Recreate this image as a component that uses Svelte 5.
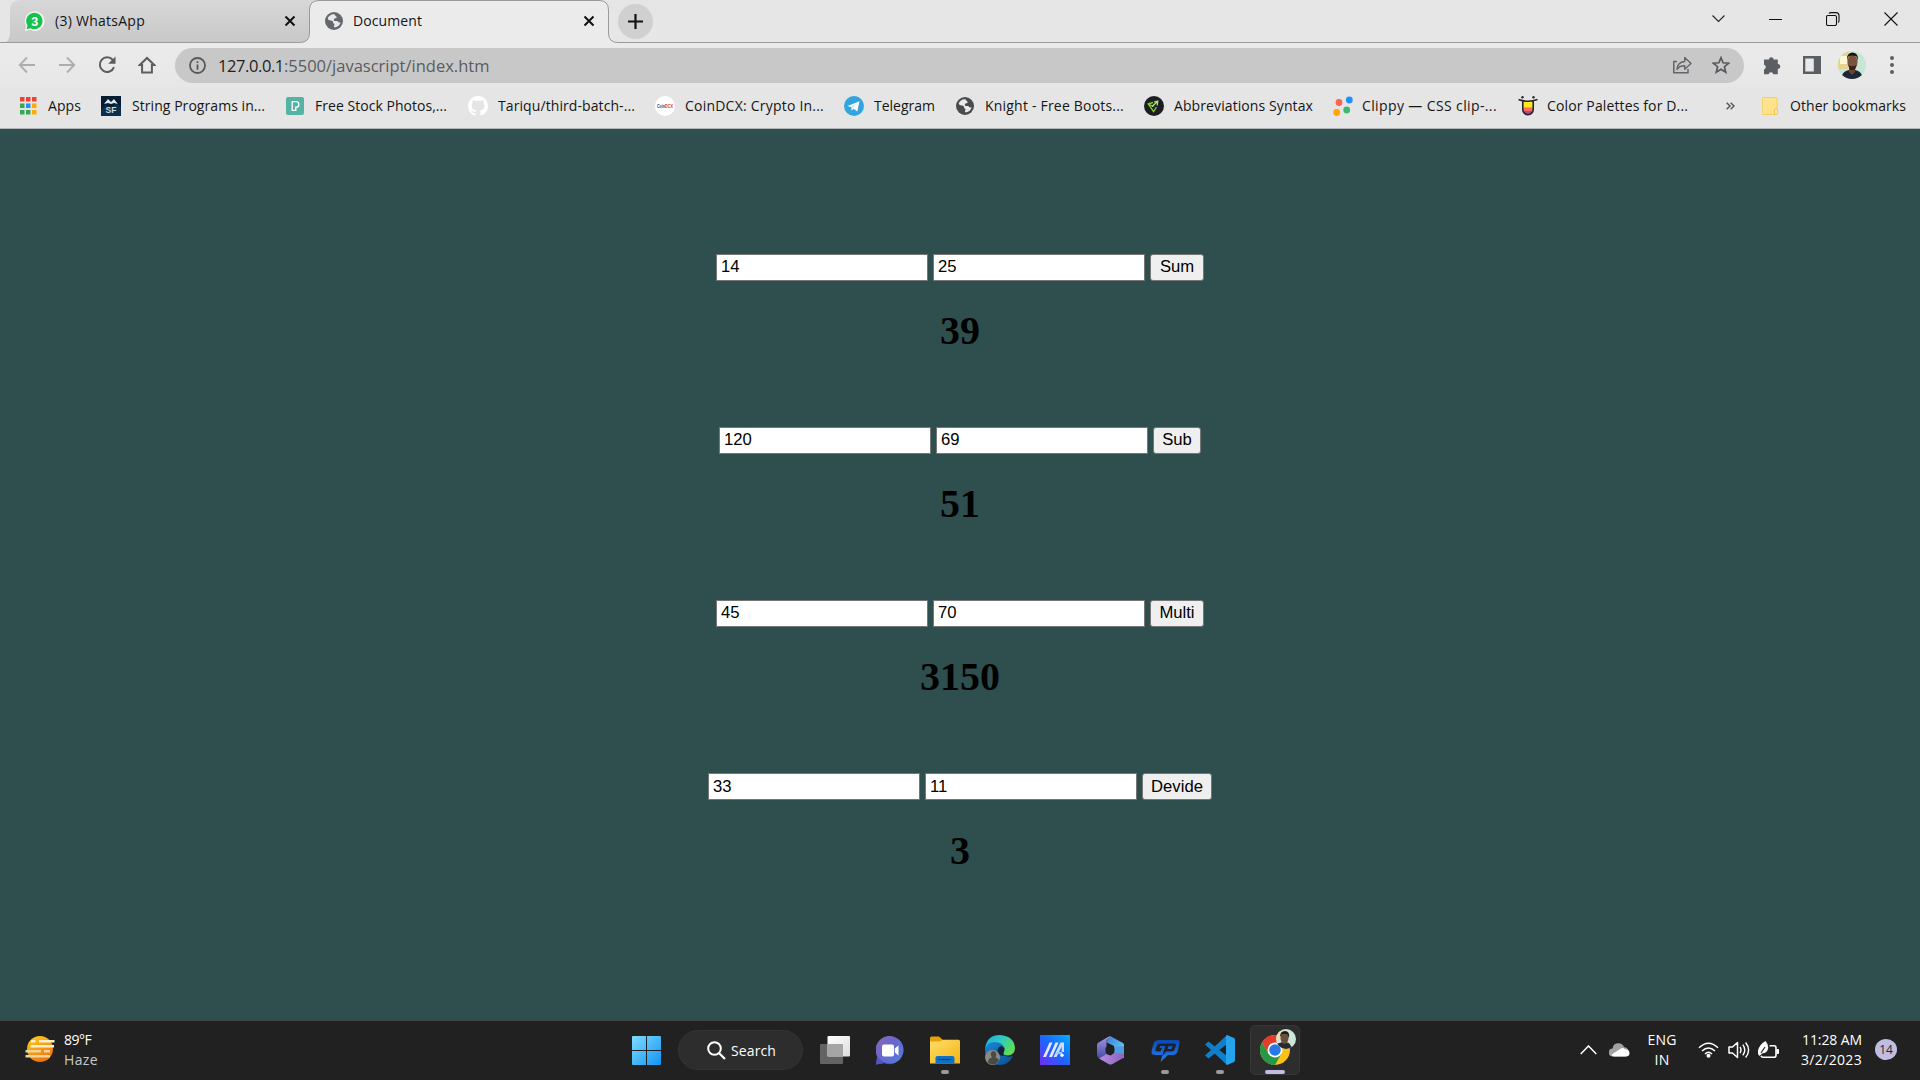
<script>
  let rows = $state([
    { a: '14', b: '25', label: 'Sum', width: 54, run: (x, y) => x + y },
    { a: '120', b: '69', label: 'Sub', width: 48, run: (x, y) => x - y },
    { a: '45', b: '70', label: 'Multi', width: 54, run: (x, y) => x * y },
    { a: '33', b: '11', label: 'Devide', width: 70, run: (x, y) => x / y }
  ]);

  const bookmarks = [
    { icon: 'apps', text: 'Apps', slot: 81, gap: 27, w: 33 },
    { icon: 'sf', text: 'String Programs in...', slot: 185, gap: 30, w: 133 },
    { icon: 'pexels', text: 'Free Stock Photos,...', slot: 182, gap: 28, w: 132 },
    { icon: 'github', text: 'Tariqu/third-batch-...', slot: 187, gap: 29, w: 137 },
    { icon: 'coin', text: 'CoinDCX: Crypto In...', slot: 189, gap: 29, w: 139 },
    { icon: 'telegram', text: 'Telegram', slot: 112, gap: 29, w: 61 },
    { icon: 'globe', text: 'Knight - Free Boots...', slot: 188, gap: 28, w: 139 },
    { icon: 'emmet', text: 'Abbreviations Syntax', slot: 189, gap: 29, w: 139 },
    { icon: 'clippy', text: 'Clippy — CSS clip-...', slot: 185, gap: 28, w: 135 },
    { icon: 'colorhunt', text: 'Color Palettes for D...', slot: 208, gap: 28, w: 141 }
  ];

  // Adjusts letter spacing so that a label takes up the given width.
  function fit(node, width) {
    const natural = node.getBoundingClientRect().width;
    const count = [...node.textContent].length;
    if (count > 1) node.style.letterSpacing = (width - natural) / count + 'px';
  }
</script>

{#snippet globe(color)}
  <svg width="18" height="18" viewBox="0 0 18 18">
    <circle cx="9" cy="9" r="9" fill={color} />
    <path d="M9.4 2.2c-2.9-.4-5.600 1.300-6.700 4.100.2 1.500 1.500 2.100 3.200 2.200 1.700.1 2.300.9 2.200 2.200.1.800 1.400.7 1.400 1.700 0 1-.9 1.500-.5 2.900 3.100.1 5.900-2 6.700-5.100-.9.700-2 .4-2.600-.5-.6-.9-2-.6-3.200-.7-1.300-.2-1.500-2-.4-2.600.8-.4 1.700-.1 2.100-1 .3-.7-.5-1-.9-1.400-.5-.5-.9-1-1.300-1.800z" fill="#e9e9e9" />
  </svg>
{/snippet}

{#snippet cross()}
  <svg width="12" height="12" viewBox="0 0 12 12"><path d="M1.500 1.500l9 9M10.500 1.500l-9 9" stroke="#111" stroke-width="2" /></svg>
{/snippet}

{#snippet face()}
  <rect width="28" height="28" fill="#c6e6d6" />
  <path d="M0 0h11v18H0z" fill="#e4d391" />
  <path d="M2 5h7v8H2z" fill="#fff6d4" />
  <path d="M3 28q1-8 8-9h6q7 1 8 9z" fill="#1d2536" />
  <path d="M11 17h6v4l-3 3-3-3z" fill="#68452f" />
  <ellipse cx="14.500" cy="11" rx="5" ry="7.500" fill="#7b533c" />
  <path d="M9 10q-1-8 5.500-8.500Q21 2 20 10q-1-4-2-5-4-1-7 0-1.500 1-2 5z" fill="#15120f" />
  <path d="M10.500 14q4 2.500 8 0l-1.500 5h-5z" fill="#35231b" />
{/snippet}

{#snippet bookmarkIcon(name)}
  {#if name === 'apps'}
    <svg width="17" height="18" viewBox="0 0 17 18">
      <g fill="#ea4335"><path d="M0 0h4.500v4.500H0zM6 0h4.500v4.500H6zM12 0h4.500v4.500H12z" /></g>
      <path d="M0 6.500h4.500V11H0zM0 13h4.500v4.500H0zM6 13h4.500v4.500H6z" fill="#34a853" />
      <path d="M6 6.500h4.500V11H6z" fill="#2d8cf5" />
      <path d="M12 6.500h4.500V11H12zM12 13h4.500v4.500H12z" fill="#fbac05" />
    </svg>
  {:else if name === 'sf'}
    <svg width="20" height="20" viewBox="0 0 20 20">
      <rect width="20" height="20" fill="#071d35" />
      <path d="M0 14l5-5 4 4 6-6 5 4v9H0z" fill="#0a314c" />
      <path d="M3 8q3-5 7-1 3-4 7 1l-4-1-3 1-3-1z" fill="#dce8ee" />
      <path d="M4 7l3-4 3 3 3-3 3 4z" fill="#dce8ee" />
      <text x="10" y="17" text-anchor="middle" font-family="Liberation Sans, sans-serif" font-weight="700" font-size="8.500" fill="#cfdbe4">SF</text>
    </svg>
  {:else if name === 'pexels'}
    <svg width="18" height="18" viewBox="0 0 18 18">
      <rect width="18" height="18" rx="2" fill="#54b3a5" />
      <path d="M6.200 4.600h4q2.700.2 2.700 2.800t-2.700 2.800H9.800v3.200H6.200z" fill="none" stroke="#fff" stroke-width="1.300" />
    </svg>
  {:else if name === 'github'}
    <svg width="20" height="20" viewBox="0 0 16 16"><path fill="#fff" d="M8 0C3.580 0 0 3.580 0 8c0 3.540 2.290 6.530 5.470 7.590.4.070.55-.17.55-.38 0-.19-.01-.82-.01-1.490-2.010.37-2.530-.49-2.690-.94-.09-.23-.48-.94-.82-1.130-.28-.15-.68-.52-.01-.53.63-.01 1.080.58 1.230.82.720 1.210 1.870.87 2.330.66.070-.52.280-.87.510-1.070-1.780-.2-3.640-.89-3.640-3.950 0-.87.310-1.590.82-2.150-.08-.2-.36-1.020.08-2.120 0 0 .67-.21 2.200.82a7.700 7.700 0 0 1 4 0c1.530-1.040 2.200-.82 2.200-.82.440 1.100.160 1.920.08 2.120.510.560.82 1.270.82 2.150 0 3.070-1.870 3.750-3.650 3.950.290.250.540.730.540 1.480 0 1.070-.01 1.930-.01 2.200 0 .21.150.46.550.38A8 8 0 0 0 8 0z" /></svg>
  {:else if name === 'coin'}
    <svg width="20" height="20" viewBox="0 0 20 20">
      <circle cx="10" cy="10" r="10" fill="#fff" />
      <text x="2" y="12" font-family="Liberation Sans, sans-serif" font-weight="700" font-size="5" textLength="8" lengthAdjust="spacingAndGlyphs" fill="#343c68">Coin</text>
      <text x="10" y="12" font-family="Liberation Sans, sans-serif" font-weight="700" font-size="5" textLength="8" lengthAdjust="spacingAndGlyphs" fill="#ee3226">DCX</text>
    </svg>
  {:else if name === 'telegram'}
    <svg width="20" height="20" viewBox="0 0 20 20">
      <circle cx="10" cy="10" r="10" fill="#30a5df" />
      <path d="M3.500 9.900l12-4.700-2.200 10.300-3.700-2.700-1.800 1.800-.5-3.400z" fill="#fff" />
      <path d="M7.300 11.200l5.700-4-4.600 4.800-.6 2.600z" fill="#b5d9ec" />
    </svg>
  {:else if name === 'globe'}
    {@render globe('#484b4f')}
  {:else if name === 'emmet'}
    <svg width="20" height="20" viewBox="0 0 20 20">
      <circle cx="10" cy="10" r="10" fill="#1b1e22" />
      <path d="M9 6.500L4.200 7.800 9.600 15.500 12.500 11M4.500 8l5 2.500" fill="none" stroke="#8ed41f" stroke-width="1.300" />
      <path d="M8 10.500L13 6M10 6l3.800-1-.6 4.500" fill="none" stroke="#b9ef75" stroke-width="1.200" />
    </svg>
  {:else if name === 'clippy'}
    <svg width="20" height="20" viewBox="0 0 20 20">
      <circle cx="6" cy="6.500" r="3.400" fill="#ff6450" /><circle cx="16.300" cy="4" r="3.400" fill="#1e90ff" />
      <circle cx="3.700" cy="16.500" r="3.400" fill="#ffa500" /><circle cx="13.700" cy="14" r="3.400" fill="#3cb873" />
    </svg>
  {:else}
    <svg width="20" height="20" viewBox="0 0 20 20">
      <clipPath id="tongue"><path d="M4.500 5h11v8.500a5.500 5.500 0 0 1-11 0z" /></clipPath>
      <g clip-path="url(#tongue)"><path d="M4 5h12v7H4z" fill="#ffe81f" /><path d="M4 11.500h12V15H4z" fill="#ff6b60" /><path d="M4 15h12v5H4z" fill="#b0448b" /></g>
      <path d="M.5 3.500q9.500 3.500 19 0M4.800 5v8.500a5.200 5.200 0 0 0 10.400 0V5" fill="none" stroke="#25252b" stroke-width="1.600" />
      <circle cx="4.500" cy="1.200" r="1.200" fill="#25252b" /><circle cx="15.500" cy="1.200" r="1.200" fill="#25252b" />
    </svg>
  {/if}
{/snippet}

<div class="screen">
  <header class="tabstrip">
    <svg class="outline" width="1920" height="43" viewBox="0 0 1920 43">
      <defs>
        <linearGradient id="tabIdle" x1="0" y1="0" x2="0" y2="1"><stop offset="0" stop-color="#d7d7d7" /><stop offset="1" stop-color="#c8c8c8" /></linearGradient>
      </defs>
      <path d="M1 43Q10 43 10 33V10Q10 0 20 0H320V33Q309 43 300 43z" fill="url(#tabIdle)" />
      <path d="M300 43Q309.500 42 309.500 33V10Q309.500.5 319 .5H599Q608.500.5 608.500 10V33Q608.500 42.500 618 42.500V43z" fill="#ebebeb" />
      <path d="M0 42.500H299.500Q309.500 42.500 309.500 33V10Q309.500.5 319 .5H599Q608.500.5 608.500 10V33Q608.500 42.500 618 42.500H1920" fill="none" stroke="#9a9a9a" />
    </svg>
    <div class="tabs">
      <div class="tab">
        <svg width="21" height="20" viewBox="0 0 21 20">
          <path d="M1 20l1.200-5A9.800 9.800 0 1 1 6 18.700z" fill="#f7f7f7" />
          <path d="M2.500 18.300l1-3.800a8.200 8.200 0 1 1 3 2.700z" fill="#16c24d" />
          <text x="10.700" y="14.600" text-anchor="middle" font-family="Liberation Sans, sans-serif" font-weight="700" font-size="12.500" fill="#fff">3</text>
        </svg>
        <span class="title" use:fit={90}>(3) WhatsApp</span>
        {@render cross()}
      </div>
      <div class="tab current">
        {@render globe('#64686c')}
        <span class="title" use:fit={69}>Document</span>
        {@render cross()}
      </div>
      <div class="plus">
        <svg width="15" height="15" viewBox="0 0 15 15"><path d="M7.500 0v15M0 7.500h15" stroke="#111" stroke-width="2.200" /></svg>
      </div>
      <div class="window-buttons">
        <svg width="13" height="8" viewBox="0 0 13 8"><path d="M.5.5l6 6 6-6" fill="none" stroke="#222" stroke-width="1.100" /></svg>
        <svg width="13" height="14" viewBox="0 0 13 14"><path d="M0 7.500h13" stroke="#111" /></svg>
        <svg width="14" height="14" viewBox="0 0 14 14"><rect x=".5" y="3.500" width="10" height="10" rx="1.500" fill="none" stroke="#111" stroke-width="1.100" /><path d="M3 1.500Q3.500.6 5 .6h5q3 0 3 3v5q0 1.500-1 2" fill="none" stroke="#111" stroke-width="1.100" /></svg>
        <svg width="14" height="14" viewBox="0 0 14 14"><path d="M.5.5l13 13M13.500.5l-13 13" stroke="#111" stroke-width="1.100" /></svg>
      </div>
    </div>
  </header>

  <nav class="toolbar">
    <div class="nav-icons">
      <svg width="18" height="18" viewBox="0 0 18 18"><path d="M17 9H2M9 1.500L1.700 9 9 16.500" fill="none" stroke="#adadad" stroke-width="1.800" /></svg>
      <svg width="18" height="18" viewBox="0 0 18 18"><path d="M1 9h15M9 1.500L16.300 9 9 16.500" fill="none" stroke="#adadad" stroke-width="1.800" /></svg>
      <svg width="18" height="18" viewBox="0 0 18 18"><path d="M14.800 4A7.300 7.300 0 1 0 16 11.200" fill="none" stroke="#5a5d61" stroke-width="2" /><path d="M17.500.5v7.300h-7.300z" fill="#5a5d61" /></svg>
      <svg width="18" height="18" viewBox="0 0 18 18"><path d="M1.800 9L9 2l7.200 7h-2.300v7.500H4.100V9z" fill="none" stroke="#5a5d61" stroke-width="2" /></svg>
    </div>
    <div class="omnibox">
      <svg width="17" height="17" viewBox="0 0 17 17"><circle cx="8.500" cy="8.500" r="7.500" fill="none" stroke="#55585c" stroke-width="1.800" /><path d="M8.500 7.400v5.300M8.500 4.200v1.900" stroke="#55585c" stroke-width="1.800" /></svg>
      <div class="url"><span class="host" use:fit={66}>127.0.0.1</span><span use:fit={205.5}>:5500/javascript/index.htm</span></div>
      <svg width="20" height="18" viewBox="0 0 20 18"><path d="M5 5.500H1.800V16.800H16V13" fill="none" stroke="#626569" stroke-width="1.500" /><path d="M5 13.500q.5-7.500 7.700-8V1.500L19 7.500l-6.300 5.800V9.700Q7.500 9.500 5 13.500z" fill="none" stroke="#626569" stroke-width="1.400" stroke-linejoin="round" /></svg>
      <svg width="18" height="18" viewBox="0 0 18 18"><path d="M9 1.700l2.100 5.100 5.500.4-4.200 3.500 1.300 5.400L9 13.200l-4.700 2.900 1.300-5.400L1.400 7.200l5.500-.4z" fill="none" stroke="#55585c" stroke-width="1.700" /></svg>
    </div>
    <svg class="puzzle" width="19" height="19" viewBox="0 0 19 19"><path d="M6 3.500a2.300 2.300 0 0 1 4.600 0h4.200v4.400a2.500 2.500 0 0 1 0 5v5.300h-4.500a2.400 2.400 0 0 0-4.700 0H1V13.500a2.500 2.500 0 0 0 0-4.800V3.500z" fill="#5b5f64" /></svg>
    <svg class="panel" width="18" height="18" viewBox="0 0 18 18"><path d="M0 0h18v18H0zM2.300 2.500v13h8.500v-13z" fill="#5b5f64" fill-rule="evenodd" /></svg>
    <svg class="avatar" width="28" height="28" viewBox="0 0 28 28">{@render face()}</svg>
    <svg width="4" height="18" viewBox="0 0 4 18"><circle cx="2" cy="2" r="2" fill="#5b5f64" /><circle cx="2" cy="9" r="2" fill="#5b5f64" /><circle cx="2" cy="16" r="2" fill="#5b5f64" /></svg>
  </nav>

  <div class="bookmarks">
    {#each bookmarks as mark}
      <div class="bookmark" style="width:{mark.slot}px">
        <div class="mark-icon" style="width:{mark.gap + 2}px">{@render bookmarkIcon(mark.icon)}</div>
        <span use:fit={mark.w}>{mark.text}</span>
      </div>
    {/each}
    <svg class="more" width="9" height="8" viewBox="0 0 9 8"><path d="M.7.7L4 4 .7 7.300M4.700.7L8 4 4.700 7.300" fill="none" stroke="#55585c" stroke-width="1.500" /></svg>
    <i class="divider"></i>
    <svg class="folder" width="16" height="18" viewBox="0 0 16 18"><path d="M1 .5h13q1 0 1 1V12q-2 0-2.300 2v3.500H1q-.7 0-.7-1V1.500q0-1 .7-1z" fill="#ffe28b" stroke="#f6cf5f" /><path d="M12.500 17.500v-4.200q.2-1.300 1.500-1.500 1.500 0 1.500 1.500v3q0 1.200-1.500 1.200z" fill="#ffe9a6" stroke="#f2c64b" /></svg>
    <span use:fit={116}>Other bookmarks</span>
  </div>

  <main>
    {#each rows as row}
      <section>
        <div class="fields">
          <input bind:value={row.a} />
          <input bind:value={row.b} />
          <button style="width:{row.width}px">{row.label}</button>
        </div>
        <h1>{row.run(Number(row.a), Number(row.b))}</h1>
      </section>
    {/each}
  </main>

  <footer class="taskbar">
    <div class="weather">
      <svg width="30" height="28" viewBox="0 0 30 28">
        <defs><linearGradient id="sun" x1="0" y1="0" x2=".5" y2="1"><stop offset="0" stop-color="#ffd21c" /><stop offset="1" stop-color="#ef7310" /></linearGradient></defs>
        <circle cx="15" cy="14" r="13" fill="url(#sun)" />
        <path d="M6 6.200h4.500M14 6.200h15.500M5.500 11.200H29" stroke="#fff0cb" stroke-width="2.400" />
        <path d="M.5 16.200H16M19 16.200h6M.5 21.200H25" stroke="#ecd49a" stroke-width="2.400" />
      </svg>
      <div class="stack"><span use:fit={30.5}>89°F</span><span class="dim" use:fit={34}>Haze</span></div>
    </div>

    <div class="apps">
      <svg class="start" width="29" height="29" viewBox="0 0 29 29">
        <defs><linearGradient id="win" x1="0" y1="0" x2="1" y2="1" gradientUnits="objectBoundingBox"><stop offset="0" stop-color="#7fdcff" /><stop offset="1" stop-color="#1193f5" /></linearGradient></defs>
        <path d="M1 0h13v14H0V1q0-1 1-1zM15 0h13q1 0 1 1v13H15zM0 15h14v14H1q-1 0-1-1zM15 15h14v13q0 1-1 1H15z" fill="url(#win)" />
      </svg>
      <div class="search">
        <svg width="19" height="19" viewBox="0 0 19 19"><circle cx="7.500" cy="7.500" r="6.300" fill="none" stroke="#fff" stroke-width="2" /><path d="M12 12l6 6" stroke="#fff" stroke-width="2.200" /></svg>
        <span use:fit={45}>Search</span>
      </div>
      <div class="app">
        <svg width="30" height="28" viewBox="0 0 30 28">
          <defs><linearGradient id="tv" x1="0" y1="0" x2="1" y2="1"><stop offset="0" stop-color="#fff" /><stop offset="1" stop-color="#dcdcdc" /></linearGradient></defs>
          <rect y="8" width="23" height="20" rx="1" fill="#636363" /><rect x="7.500" width="22.500" height="20.500" rx="1" fill="url(#tv)" /><path d="M7.500 8H23v12.500H7.500z" fill="#a5a5a5" />
        </svg>
      </div>
      <div class="app">
        <svg width="29" height="29" viewBox="0 0 29 29">
          <defs><linearGradient id="chat" x1="0" y1="0" x2="1" y2=".9"><stop offset="0" stop-color="#9366b5" /><stop offset=".45" stop-color="#6866cc" /><stop offset="1" stop-color="#527de1" /></linearGradient></defs>
          <path d="M0 28.500l1.200-8A14 14 0 1 1 8.500 27z" fill="url(#chat)" /><path d="M0 28.500l1.200-8Q6 28 18 27.500 14 29 8.500 27z" fill="#5551c4" />
          <rect x="6" y="8.500" width="12" height="12" rx="2" fill="#fff" /><path d="M18.800 12.500l3.700-3v10l-3.700-3z" fill="#fff" />
        </svg>
      </div>
      <div class="app">
        <svg width="30" height="28" viewBox="0 0 30 28">
          <defs><linearGradient id="fold" x1="0" y1="0" x2="1" y2="1"><stop offset="0" stop-color="#ffdd69" /><stop offset="1" stop-color="#f5b516" /></linearGradient></defs>
          <path d="M0 7V2q0-1.500 1.500-1.500H9L13 4h7v6H0z" fill="#e3a008" /><path d="M0 5.500h9.500L13 3.700h15.500q1.500 0 1.500 1.500V27.500H0z" fill="url(#fold)" />
          <path d="M5.500 27.500V22q0-2 2-2h15q2 0 2 2v5.500z" fill="#0d72c5" /><path d="M8.500 23.500h13" stroke="#07457d" stroke-width="1.300" />
        </svg>
        <i class="running"></i>
      </div>
      <div class="app">
        <svg width="30" height="30" viewBox="0 0 30 30">
          <defs>
            <linearGradient id="edge" x1="0" y1="0" x2="1" y2=".5"><stop offset="0" stop-color="#1fa9e2" /><stop offset=".5" stop-color="#2cc9c6" /><stop offset="1" stop-color="#5ddd58" /></linearGradient>
            <linearGradient id="edgeLow" x1="0" y1="0" x2="1" y2="1"><stop offset="0" stop-color="#168bd8" /><stop offset="1" stop-color="#0b4d94" /></linearGradient>
          </defs>
          <path d="M0 14Q1 6 9 6.500c8 0 11 5 10 10-1 5 4 6 9 4.500Q24 30 14 30 0 29 0 14z" fill="url(#edgeLow)" />
          <path d="M.2 13Q2 0 15 0q14 1 15 13 0 7-7 7.500-5 0-4.500-3 1.500-2 1-4.500Q17 7 9.500 7 3 7 .2 13z" fill="url(#edge)" />
          <path d="M12.500 17q-.5-5 4-6 3.500 2 2.500 5.500-1.500 2.500.5 4Q14 22 12.500 17z" fill="#10253a" />
          <circle cx="7.500" cy="22.500" r="7.500" fill="#8c8a82" /><path d="M3 28q0-5 4-5.500-3-5 1-6.500 5 1 2.500 6.500 4 1 3 4-4 5-10.500 1.500z" fill="#4b4a47" />
        </svg>
      </div>
      <div class="app">
        <svg width="30" height="30" viewBox="0 0 30 30">
          <defs><linearGradient id="asus" x1="1" y1="0" x2="0" y2="1"><stop offset="0" stop-color="#05adff" /><stop offset=".5" stop-color="#1a67ff" /><stop offset="1" stop-color="#722cf5" /></linearGradient></defs>
          <rect width="30" height="30" fill="url(#asus)" />
          <path d="M3 22L9.500 7.500h3L6 22zM9 22L15.500 7.500h3L12 22z" fill="#e2e9ff" />
          <path d="M13.500 22L20.500 7.500H24V17h-2.300v-5.500L16.500 22z" fill="#d2deff" /><path d="M17 17h5v2h-6z" fill="#a9c0ff" /><circle cx="22" cy="20.300" r="1.700" fill="#fff" />
        </svg>
      </div>
      <div class="app">
        <svg width="27" height="29" viewBox="0 0 27 29">
          <defs>
            <linearGradient id="m1" x1="0" y1="0" x2="0" y2="1"><stop offset="0" stop-color="#a995e8" /><stop offset="1" stop-color="#3f4ca4" /></linearGradient>
            <linearGradient id="m2" x1="0" y1="0" x2="1" y2="1"><stop offset="0" stop-color="#3b7edb" /><stop offset="1" stop-color="#70d9fa" /></linearGradient>
            <linearGradient id="m3" x1="0" y1="0" x2="1" y2="0"><stop offset="0" stop-color="#b78be0" /><stop offset="1" stop-color="#8c62bd" /></linearGradient>
          </defs>
          <path d="M13.500.3L26 7q1 .7 1 2v13L17 18V10L9 6z" fill="url(#m2)" />
          <path d="M14 .2L9.500 4.500v14L2.500 22.500Q0 21 0 19V9q0-1.700 1.500-2.600L11 .9q1.600-.8 3-.7z" fill="url(#m1)" />
          <path d="M2 22.500L9.500 18l4 1.500 4.500-3L27 17v3q0 1.300-1.300 2.200L15.500 28q-2 1.200-4 0z" fill="url(#m3)" /><path d="M17 11l10-1v8l-9-1z" fill="#4f9ce0" />
          <path d="M11.500 9.500q1.500-1 3 0l2.300 1.500q.7.500.7 1.500v3q0 1-.8 1.500l-2.200 1.500q-1.500 1-3 0L9.300 17q-.8-.5-.8-1.500v-3q0-1 .8-1.500z" fill="#202024" />
        </svg>
      </div>
      <div class="app">
        <svg width="29" height="25" viewBox="0 0 29 25">
          <defs><linearGradient id="qp" x1="0" y1="0" x2="0" y2="1"><stop offset="0" stop-color="#0b49b4" /><stop offset="1" stop-color="#2480f8" /></linearGradient></defs>
          <path d="M8 2h18q3 0 2.500 3L27 12q-1 5-5 5h-5l-7.500 7 1.800-7H4q-4 0-3.500-4L2.500 6Q3.500 2 8 2zM9 5.500q-2.500 0-3 2L4.500 11q-.6 2.500 2 2.500h3L11 10H8.500l.8-2h5l-3 10 4-4.500H21q2 0 2.500-2L25 7.500q.3-2-1.500-2zM17.500 8h4l-1 3h-4z" fill="url(#qp)" fill-rule="evenodd" />
        </svg>
        <i class="running"></i>
      </div>
      <div class="app">
        <svg width="30" height="30" viewBox="0 0 30 30">
          <path d="M22 0v9L3.500 23.500 0 20.500zM0 9.500l3.500-3L22 21v9z" fill="#0f7fc9" /><path d="M22 0l7 3q1 .5 1 2v20q0 1.500-1 2l-7 3-1-1V1z" fill="#25a4ee" />
        </svg>
        <i class="running"></i>
      </div>
      <div class="app active">
        <svg width="36" height="36" viewBox="0 0 36 36">
          <g transform="translate(0 6)">
            <circle cx="15" cy="15" r="15" fill="#fbc116" />
            <path d="M2 7.500A15 15 0 0 1 28 7.500L15 8.500 8 18z" fill="#e33b2e" />
            <path d="M2 7.500A15 15 0 0 0 15 30L21.500 18.500 8.500 18.700z" fill="#259947" />
            <circle cx="15" cy="15" r="7.500" fill="#fff" /><circle cx="15" cy="15" r="5.800" fill="#2878e8" />
          </g>
          <clipPath id="badge"><circle cx="26" cy="10" r="10" /></clipPath>
          <g clip-path="url(#badge)">
            <rect x="16" width="20" height="20" fill="#cfe6da" /><path d="M16 2h6v8h-6z" fill="#e9dfb4" />
            <path d="M16 20v-5l7-2 6 1 4 6z" fill="#262a31" /><ellipse cx="24.500" cy="9" rx="4" ry="6" fill="#68503d" />
            <path d="M20 8q0-6 5-6t4 7l-2-4h-5z" fill="#211c18" />
          </g>
        </svg>
        <i class="running wide"></i>
      </div>
    </div>

    <div class="tray">
      <svg class="up" width="17" height="10" viewBox="0 0 17 10"><path d="M.7 9l7.800-8 7.800 8" fill="none" stroke="#fff" stroke-width="1.500" /></svg>
      <svg class="cloud" width="21" height="14" viewBox="0 0 21 14"><path d="M4 13.500a4 4 0 0 1-.5-8A6 6 0 0 1 15 4q5 1 5 6l-3 3.500z" fill="#a2a2a2" /><path d="M5 13.500q-2-.2-2.500-2L12 5.500q2-1.300 4 .7 4.500.3 4.500 4-.2 3.300-3.500 3.300z" fill="#fff" /></svg>
      <div class="stack lang"><span use:fit={29}>ENG</span><span use:fit={15}>IN</span></div>
      <svg class="wifi" width="21" height="16" viewBox="0 0 21 16"><path d="M1 5.800q9.500-9 19 0M4 9q6.500-6 13 0M7 12q3.500-3.500 7 0" fill="none" stroke="#fff" stroke-width="1.500" /><circle cx="10.500" cy="13.700" r="2" fill="#fff" /></svg>
      <svg class="sound" width="22" height="18" viewBox="0 0 22 18"><path d="M1 6h3.500L9.500 1.500v15L4.500 12H1z" fill="none" stroke="#fff" stroke-width="1.500" stroke-linejoin="round" /><path d="M12 6q2 3 0 6M14.800 3.700q4 5.300 0 10.600M17.600 1.500q6 7.500 0 15" fill="none" stroke="#fff" stroke-width="1.400" /></svg>
      <svg class="battery" width="22" height="18" viewBox="0 0 22 18"><path d="M11.500 4.700H16q2 0 2 2v7.500q0 2-2 2H5q-1.500 0-2-1.500" fill="none" stroke="#fff" stroke-width="1.600" /><path d="M18.500 8h1.500q1 0 1 1v3q0 1-1 1h-1.500z" fill="#fff" /><path d="M0 13Q-1 5 7.500 0q3.500 4 2.500 8-1 4-6 4.500L1.500 15z" fill="#fff" /><path d="M3 12l4-6" stroke="#222" stroke-width="1.200" /></svg>
      <div class="stack clock"><span use:fit={60}>11:28 AM</span><span use:fit={61}>3/2/2023</span></div>
      <div class="count">14</div>
    </div>
  </footer>
</div>

<style>
  :global(body) { margin: 0; overflow: hidden; }
  .screen { width: 1920px; height: 1080px; display: flex; flex-direction: column; background: #2f4f4f; font-family: 'Open Sans', 'Noto Sans', sans-serif; font-size: 14px; color: #151515; }
  .screen * { box-sizing: border-box; }
  svg { display: block; flex: none; }
  span { white-space: nowrap; }

  .tabstrip { display: grid; height: 43px; flex: none; background: linear-gradient(#e5e5e5, #e7e7e7); }
  .outline, .tabs { grid-area: 1 / 1; }
  .tabs { display: flex; align-items: center; height: 42px; }
  .tab { display: flex; align-items: center; width: 299px; margin-left: 10px; padding: 0 14px; }
  .tab .title { margin-left: 10px; padding-bottom: 2px; }
  .tab svg:last-child { margin-left: auto; }
  .tab:first-child svg:last-child { margin-right: -1px; }
  .tab.current { margin-left: 0; padding: 0 14px 0 16px; }
  .tab.current svg:last-child { margin-right: -1px; }
  .plus { display: grid; place-items: center; width: 35px; height: 35px; margin-left: 10px; border-radius: 50%; background: #d0d0d0; }
  .window-buttons { display: flex; align-items: center; gap: 44px; margin: -5px 22px 0 auto; }

  .toolbar { display: flex; align-items: center; height: 44px; flex: none; padding: 0 26px 0 18px; background: linear-gradient(#ebebeb, #e7e7e7); }
  .nav-icons { display: flex; gap: 22px; width: 157px; }
  .omnibox { display: flex; align-items: center; width: 1570px; height: 35px; padding: 0 14px; border-radius: 18px; background: #c8c8c8; }
  .url { display: flex; flex: 1; margin-left: 12px; font-size: 16.500px; color: #5a5c5f; }
  .host { color: #1d1f21; }
  .omnibox svg:last-child { margin-left: 20px; }
  .puzzle { margin-left: 19px; }
  .panel { margin-left: 21px; }
  .avatar { margin: 0 24px 0 17px; border-radius: 50%; }

  .bookmarks { display: flex; align-items: center; height: 42px; flex: none; padding: 0 14px 3px 19px; border-bottom: 1px solid #b2b6b6; background: #e5e5e5; }
  .bookmark { display: flex; align-items: center; flex: none; }
  .mark-icon { flex: none; }
  .mark-icon :global(svg) { margin-left: 1px; }
  .bookmarks span { flex: none; padding-bottom: 1px; }
  .more { margin-left: 1px; }
  .divider { width: 1px; height: 20px; margin: 0 14px 0 13px; background: #b9b9b9; }
  .folder { margin-right: 12px; }

  main { flex: 1; padding-top: 125px; }
  section { height: 173px; }
  .fields { display: flex; justify-content: center; gap: 5px; height: 27px; }
  input, button { height: 27px; border: 1px solid #767676; font: 16.667px 'Liberation Sans', Arial, sans-serif; color: #000; }
  input { width: 212px; margin: 0; padding: 0 4px 2px; border-radius: 0; background: #fff; outline: none; }
  button { margin: 0; padding: 0 0 2px; border-radius: 3px; background: #efefef; text-align: center; }
  h1 { margin: 27px 0 0; font: 700 40px/46px 'Liberation Serif', 'Times New Roman', serif; text-align: center; color: #000; }
  section:last-child input, section:last-child button { padding-bottom: 0; }
  section:last-child h1 { margin-top: 28px; }

  .taskbar { display: grid; grid-template-columns: 632px 668px 620px; align-items: center; height: 60px; flex: none; border-top: 1px solid #414141; background: #212121; color: #fff; }
  .weather { display: flex; align-items: center; gap: 9px; padding: 0 0 3px 25px; }
  .weather .stack { margin-top: 2px; }
  .stack { display: flex; flex-direction: column; line-height: 20px; }
  .dim { color: #c8c8c8; }
  .apps { display: flex; align-items: center; height: 59px; padding-bottom: 1px; }
  .search { display: flex; align-items: center; gap: 5px; width: 125px; height: 40px; margin: 0 7px 0 17px; padding-left: 28px; border: 1px solid #343434; border-radius: 20px; background: #2d2d2d; }
  .app { position: relative; display: grid; place-items: center; width: 50px; height: 50px; margin-right: 5px; flex: none; border-radius: 5px; }
  .app.active { margin-right: 0; padding: 0 0 6px 5px; border: 1px solid #373737; background: #2d2d2d; }
  .running { position: absolute; bottom: 1px; left: 21px; width: 8px; height: 4px; border-radius: 2px; background: #9b9b9b; }
  .running.wide { bottom: 0; left: 14px; width: 20px; background: #c1bde2; }
  .tray { display: flex; align-items: center; padding: 0 0 2px 280px; }
  .cloud { margin-left: 12px; }
  .lang { align-items: center; width: 30px; margin-left: 17px; }
  .wifi { margin-left: 21px; }
  .sound { margin-left: 9px; }
  .battery { margin-left: 8px; }
  .clock { align-items: flex-end; width: 62px; margin-left: 20px; }
  .count { display: grid; place-items: center; width: 22px; height: 21px; margin-left: 13px; border-radius: 50%; background: #c1bde2; color: #282730; font-size: 12px; }
</style>
